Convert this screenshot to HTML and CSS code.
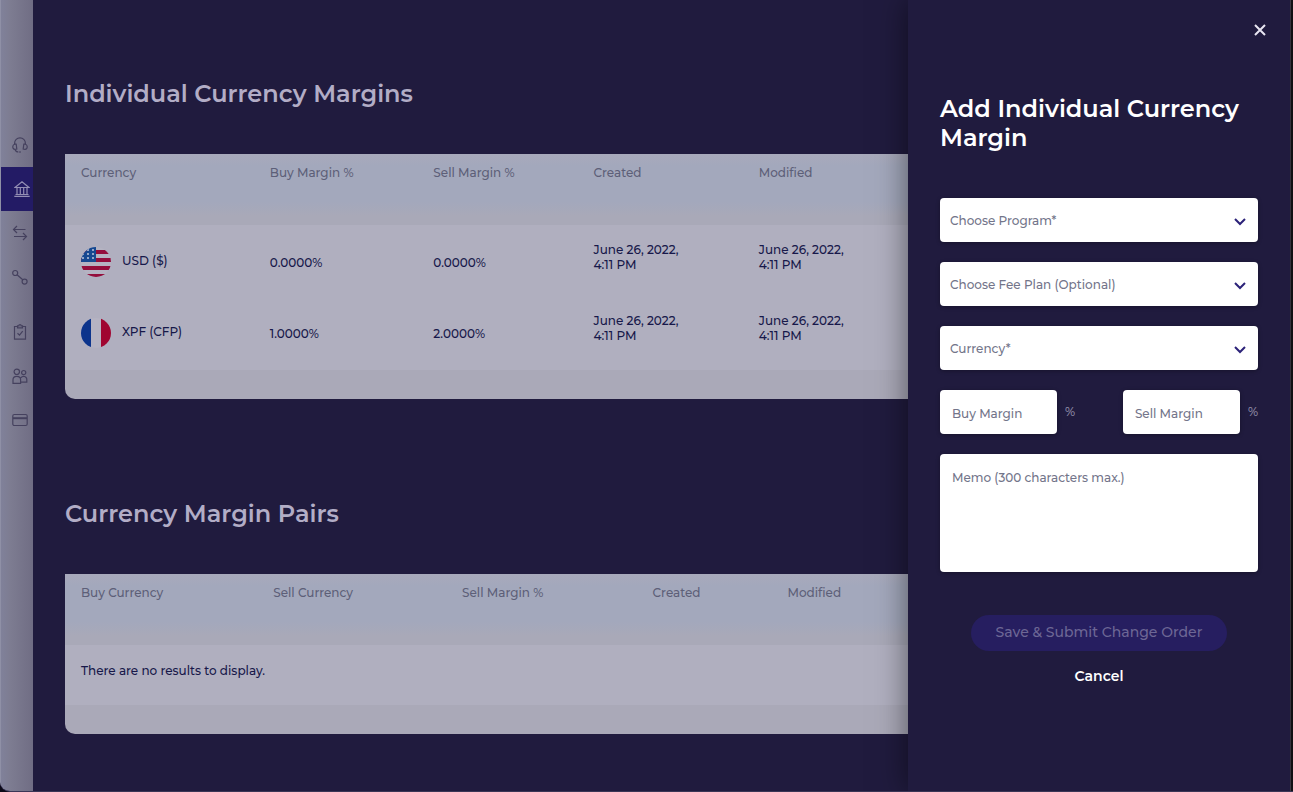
FILE: index.html
```html
<!DOCTYPE html>
<html lang="en">
<head>
    <meta charset="UTF-8">
    <meta name="viewport" content="width=device-width, initial-scale=1.0">
    <title>Currency Margins</title>
    <link rel="stylesheet" href="styles.css">
</head>
<body>

<div class="app">
    <!-- Sidebar -->
    <nav class="sidebar" aria-label="Main">
        <a href="#" aria-label="Support">
            <svg viewBox="0 0 16 16"><path d="M2.600 7.500V6.200a5.400 5.400 0 0 1 10.800 0v1.300M4.200 7.200C.2 6.400-.4 12 3 12.400l1.800-.4zM11.800 7.200c4-.8 4.600 4.800 1.200 5.200l-1.800-.4zM3 12.400c.4 1.800 1.600 2.600 3.400 2.600M7 15h2"/></svg>
        </a>
        <a href="#" class="active" aria-label="Banking">
            <svg viewBox="0 0 16 16"><path d="M1 6.500 8 .8l7 5.700zM3 6.500v7M6.300 6.500v7M9.700 6.500v7M13 6.500v7M1.500 13.500h13M.3 15.400h15.400"/></svg>
        </a>
        <a href="#" aria-label="Transfers">
            <svg viewBox="0 0 16 16"><path d="M13.500 4.500h-12M5 1 1.500 4.500 5 8M2 11.500h12.500M11 8l3.500 3.500L11 15"/></svg>
        </a>
        <a href="#" aria-label="Connections">
            <svg viewBox="0 0 16 16"><circle cx="3.200" cy="4" r="2.500"/><circle cx="12.600" cy="12.600" r="2.500"/><path d="m5 5.800 5.800 5"/></svg>
        </a>
        <a href="#" class="group-start" aria-label="Tasks">
            <svg viewBox="0 0 16 16"><path d="M5.500 2.500h-3v12.700h11V2.500h-3M5.500 1.800h1.300a1.200 1.200 0 0 1 2.400 0h1.300v2h-5zM5.500 9.300l2 1.800 3.200-4"/></svg>
        </a>
        <a href="#" aria-label="Users">
            <svg viewBox="0 0 16 16"><circle cx="4.800" cy="3.800" r="2.700"/><circle cx="11.700" cy="4.600" r="2.100"/><path d="M1 15.300v-3.500c0-4.500 7.600-4.500 7.600 0v3.500zM8.800 9.800c2-2.500 6-1.500 6 1.800v2.600H8.800"/></svg>
        </a>
        <a href="#" aria-label="Cards">
            <svg viewBox="0 0 16 16"><rect x=".8" y="2.500" width="14.400" height="11" rx="1.500"/><path class="band" d="M1 6.200h14"/></svg>
        </a>
    </nav>

    <!-- Tables -->
    <main class="content">
        <section class="section">
            <h1>Individual Currency Margins</h1>
            <div class="card">
                <table class="margins">
                    <thead>
                        <tr>
                            <th>Currency</th>
                            <th>Buy Margin %</th>
                            <th>Sell Margin %</th>
                            <th>Created</th>
                            <th>Modified</th>
                        </tr>
                    </thead>
                    <tbody>
                        <tr>
                            <td class="currency">
                                <div>
                                    <svg class="flag" viewBox="0 0 30 30">
                                        <clipPath id="round"><circle cx="15" cy="15" r="15"/></clipPath>
                                        <g clip-path="url(#round)">
                                            <path fill="#b5b3c2" d="M0 0h30v30H0z"/>
                                            <path fill="#940d3c" d="M0 3h30v4H0zM0 11h30v4H0zM0 19h30v4H0zM0 27h30v3H0z"/>
                                            <path fill="#164891" d="M0 0h15v15H0z"/>
                                            <path stroke="#93a5c7" stroke-width="2" stroke-dasharray="2 3" d="M6 3h9M1 7h14M1 11h14"/>
                                        </g>
                                    </svg>
                                    <span>USD ($)</span>
                                </div>
                            </td>
                            <td class="rate">0.0000%</td>
                            <td class="rate">0.0000%</td>
                            <td>June 26, 2022,<br>4:11 PM</td>
                            <td>June 26, 2022,<br>4:11 PM</td>
                        </tr>
                        <tr>
                            <td class="currency">
                                <div>
                                    <svg class="flag" viewBox="0 0 30 30">
                                        <g clip-path="url(#round)">
                                            <path fill="#b5b3c2" d="M0 0h30v30H0z"/>
                                            <path fill="#0c348c" d="M0 0h10v30H0z"/>
                                            <path fill="#a00530" d="M20 0h10v30H20z"/>
                                        </g>
                                    </svg>
                                    <span>XPF (CFP)</span>
                                </div>
                            </td>
                            <td class="rate">1.0000%</td>
                            <td class="rate">2.0000%</td>
                            <td>June 26, 2022,<br>4:11 PM</td>
                            <td>June 26, 2022,<br>4:11 PM</td>
                        </tr>
                    </tbody>
                </table>
            </div>
        </section>

        <section class="section">
            <h1>Currency Margin Pairs</h1>
            <div class="card">
                <table class="pairs">
                    <thead>
                        <tr>
                            <th>Buy Currency</th>
                            <th>Sell Currency</th>
                            <th>Sell Margin %</th>
                            <th>Created</th>
                            <th>Modified</th>
                        </tr>
                    </thead>
                    <tbody>
                        <tr>
                            <td class="empty" colspan="5">There are no results to display.</td>
                        </tr>
                    </tbody>
                </table>
            </div>
        </section>
    </main>

    <!-- Add margin drawer -->
    <aside class="drawer">
        <button type="button" class="close" aria-label="Close">
            <svg viewBox="0 0 12 12"><path d="m1 1 10 10M11 1 1 11"/></svg>
        </button>
        <h2>Add Individual Currency Margin</h2>
        <form>
            <div class="select">
                <select aria-label="Choose Program">
                    <option>Choose Program*</option>
                </select>
                <svg viewBox="0 0 12 8"><path d="m1 1 5 5 5-5"/></svg>
            </div>
            <div class="select">
                <select aria-label="Choose Fee Plan">
                    <option>Choose Fee Plan (Optional)</option>
                </select>
                <svg viewBox="0 0 12 8"><path d="m1 1 5 5 5-5"/></svg>
            </div>
            <div class="select">
                <select aria-label="Currency">
                    <option>Currency*</option>
                </select>
                <svg viewBox="0 0 12 8"><path d="m1 1 5 5 5-5"/></svg>
            </div>
            <div class="percents">
                <label><input type="text" placeholder="Buy Margin" aria-label="Buy Margin"><span>%</span></label>
                <label><input type="text" placeholder="Sell Margin" aria-label="Sell Margin"><span>%</span></label>
            </div>
            <textarea placeholder="Memo (300 characters max.)" aria-label="Memo"></textarea>
            <div class="actions">
                <button type="submit" class="save" disabled>Save &amp; Submit Change Order</button>
                <button type="button" class="cancel">Cancel</button>
            </div>
        </form>
    </aside>
    <div class="edge"></div>
</div>

</body>
</html>
```
FILE: styles.css
```css
* {
    margin: 0;
    padding: 0;
    box-sizing: border-box;
}
body {
    font-family: Montserrat, Inter, "Open Sans", sans-serif;
    font-size: 12px;
    font-weight: 500;
    line-height: 15px;
    background-color: #0c0a18;
    color: #17184a;
}
button, input, select, textarea {
    font: inherit;
    border: none;
}
svg {
    display: block;
    fill: none;
}
.app {
    display: flex;
    min-height: 100vh;
    background-color: #201b3e;
    border-bottom: 1px solid #3a3656;
    border-bottom-left-radius: 10px;
    overflow: hidden;
}

/* Sidebar */
.sidebar {
    width: 33px;
    padding-top: 123px;
    background: linear-gradient(to right, #80819a, #7d7c91 30%, #706d84);
    border-left: 1px solid #8f90a6;
}
.sidebar a {
    display: flex;
    align-items: center;
    height: 44px;
    padding-left: 11px;
}
.sidebar .active {
    padding-left: 13px;
    background-color: #231b65;
}
.sidebar .group-start {
    margin-top: 11px;
}
.sidebar svg {
    width: 16px;
    height: 16px;
    stroke: #45415e;
    stroke-width: 1.2;
}
.sidebar .active svg {
    stroke: #938eb4;
}
.sidebar .band {
    stroke-width: 2;
}

/* Tables */
.content {
    flex: 1;
    padding: 79px 0 0 32px;
}
.section + .section {
    margin-top: 100px;
}
h1, h2 {
    margin-bottom: 46px;
    font-size: 24px;
    font-weight: 600;
    line-height: 29px;
    color: #b2adc6;
}
.card {
    padding-bottom: 29px;
    background-color: #aaa9b8;
    border-bottom-left-radius: 10px;
    overflow: hidden;
}
table {
    width: 100%;
    table-layout: fixed;
    border-collapse: collapse;
}
th {
    height: 71px;
    padding: 11px 0 0 16px;
    font-weight: 500;
    text-align: left;
    vertical-align: top;
    color: #5d5f78;
}
thead {
    background: linear-gradient(#a8a9bb, #a3a8bc 12px, #a3a8bc 48px, #a9a9b8 62px);
}
tbody {
    background-color: #b0afbf;
}
.margins th:nth-child(1) { width: 22.4%; }
.margins th:nth-child(2) { width: 19.4%; }
.margins th:nth-child(3) { width: 19%; }
.margins th:nth-child(4) { width: 19.6%; }
.pairs th:nth-child(1) { width: 22.8%; }
.pairs th:nth-child(2) { width: 22.4%; }
.pairs th:nth-child(3) { width: 22.6%; }
.pairs th:nth-child(4) { width: 16%; }
td {
    height: 71px;
    padding: 17px 0 0 16px;
    vertical-align: top;
}
.rate {
    padding-top: 30px;
}
.currency {
    padding-top: 22px;
}
.currency div {
    display: flex;
    align-items: center;
    gap: 11px;
}
.currency span {
    padding-bottom: 3px;
}
.flag {
    width: 30px;
    height: 30px;
}
.margins tbody tr:last-child td {
    height: 74px;
}
.empty {
    height: 60px;
    padding-top: 18px;
}

/* Drawer */
.drawer {
    position: relative;
    width: 382px;
    padding: 94px 32px 0;
    background-color: #201b3e;
    box-shadow: 0 0 30px rgba(0, 0, 0, 0.5);
}
.close {
    position: absolute;
    top: 18px;
    right: 18px;
    padding: 6px;
    background: none;
    cursor: pointer;
}
.close svg {
    width: 12px;
    height: 12px;
    stroke: #e8e6f2;
    stroke-width: 2;
}
h2 {
    color: #fff;
}
form {
    display: flex;
    flex-direction: column;
    gap: 20px;
}
.select {
    position: relative;
}
.select svg {
    position: absolute;
    top: 20px;
    right: 12px;
    width: 12px;
    height: 8px;
    stroke: #2c2279;
    stroke-width: 2;
    pointer-events: none;
}
select, input, textarea {
    width: 100%;
    height: 44px;
    padding: 0 10px;
    color: #73758a;
    background-color: #fff;
    border-radius: 4px;
    box-shadow: 0 1px 4px rgba(0, 0, 0, 0.3);
    appearance: none;
}
::placeholder {
    color: #73758a;
}
.percents {
    display: flex;
    justify-content: space-between;
}
.percents label {
    display: flex;
    align-items: center;
    gap: 8px;
    color: #8f8ba6;
}
.percents span {
    padding-bottom: 2px;
}
.percents input {
    width: 117px;
    padding: 3px 12px 0;
}
textarea {
    display: block;
    height: 118px;
    padding: 16px 12px;
    resize: none;
}
.actions {
    display: flex;
    flex-direction: column;
    align-items: center;
    gap: 16px;
    padding-top: 23px;
    font-size: 14px;
}
.save {
    width: 256px;
    height: 36px;
    padding-bottom: 2px;
    color: #6d6795;
    background-color: #261e60;
    border-radius: 18px;
}
.cancel {
    font-weight: 600;
    line-height: 18px;
    color: #fff;
    background: none;
    cursor: pointer;
}
.edge {
    width: 3px;
    background-color: #151518;
    border-left: 1px solid #45434f;
}
```
